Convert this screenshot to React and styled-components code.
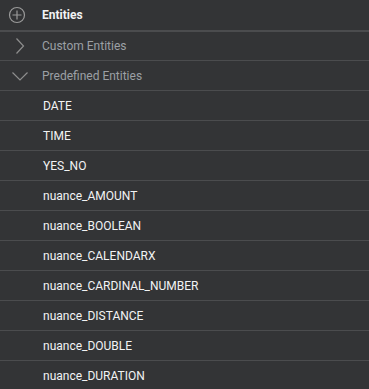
import React from 'react'
import styled, { createGlobalStyle } from 'styled-components'

const GlobalStyle = createGlobalStyle`
  html, body {
    margin: 0;
    padding: 0;
    background: #333436;
  }
`

const Panel = styled.div`
  width: 369px;
  height: 389px;
  overflow: hidden;
  background: #333436;
  font-family: Roboto, 'Liberation Sans', sans-serif;
  font-size: 12px;
`

const Row = styled.div`
  display: flex;
  align-items: center;
  height: ${(p) => p.height || 29}px;
  border-bottom: ${(p) => (p.header ? '2px' : '1px')} solid #4b4c4e;
`

const IconCell = styled.div`
  width: ${(p) => p.width || 42}px;
  display: flex;
  justify-content: center;
  align-items: center;
  flex-shrink: 0;
`

const Label = styled.span`
  color: ${(p) => (p.muted ? '#9ca0a5' : '#f2f3f4')};
  font-weight: ${(p) => (p.bold ? 700 : 400)};
  padding-left: ${(p) => p.indent || 0}px;
`

const PlusIcon = () => (
  <svg width="18" height="18" viewBox="0 0 18 18" fill="none" stroke="#9a9a9a" strokeWidth="1.2">
    <circle cx="9" cy="9" r="7.5" />
    <path d="M9 4.5v9M4.5 9h9" />
  </svg>
)

const ChevronRight = () => (
  <svg width="12" height="18" viewBox="0 0 12 18" fill="none" stroke="#8e8e8e" strokeWidth="1.2">
    <path d="M2.5 1.5l7 7.5-7 7.5" />
  </svg>
)

const ChevronDown = () => (
  <svg width="18" height="10" viewBox="0 0 18 10" fill="none" stroke="#8e8e8e" strokeWidth="1.2">
    <path d="M1.5 1.5l7.5 7.5 7.5-7.5" />
  </svg>
)

const entities = [
  'DATE',
  'TIME',
  'YES_NO',
  'nuance_AMOUNT',
  'nuance_BOOLEAN',
  'nuance_CALENDARX',
  'nuance_CARDINAL_NUMBER',
  'nuance_DISTANCE',
  'nuance_DOUBLE',
  'nuance_DURATION',
]

const App = () => (
  <Panel>
    <GlobalStyle />
    <Row header height={30}>
      <IconCell width={33}>
        <PlusIcon />
      </IconCell>
      <Label bold indent={9}>Entities</Label>
    </Row>
    <Row height={28}>
      <IconCell width={39}>
        <ChevronRight />
      </IconCell>
      <Label muted indent={3}>Custom Entities</Label>
    </Row>
    <Row>
      <IconCell width={39}>
        <ChevronDown />
      </IconCell>
      <Label muted indent={3}>Predefined Entities</Label>
    </Row>
    {entities.map((name) => (
      <Row key={name}>
        <Label indent={43}>{name}</Label>
      </Row>
    ))}
  </Panel>
)

export default App
